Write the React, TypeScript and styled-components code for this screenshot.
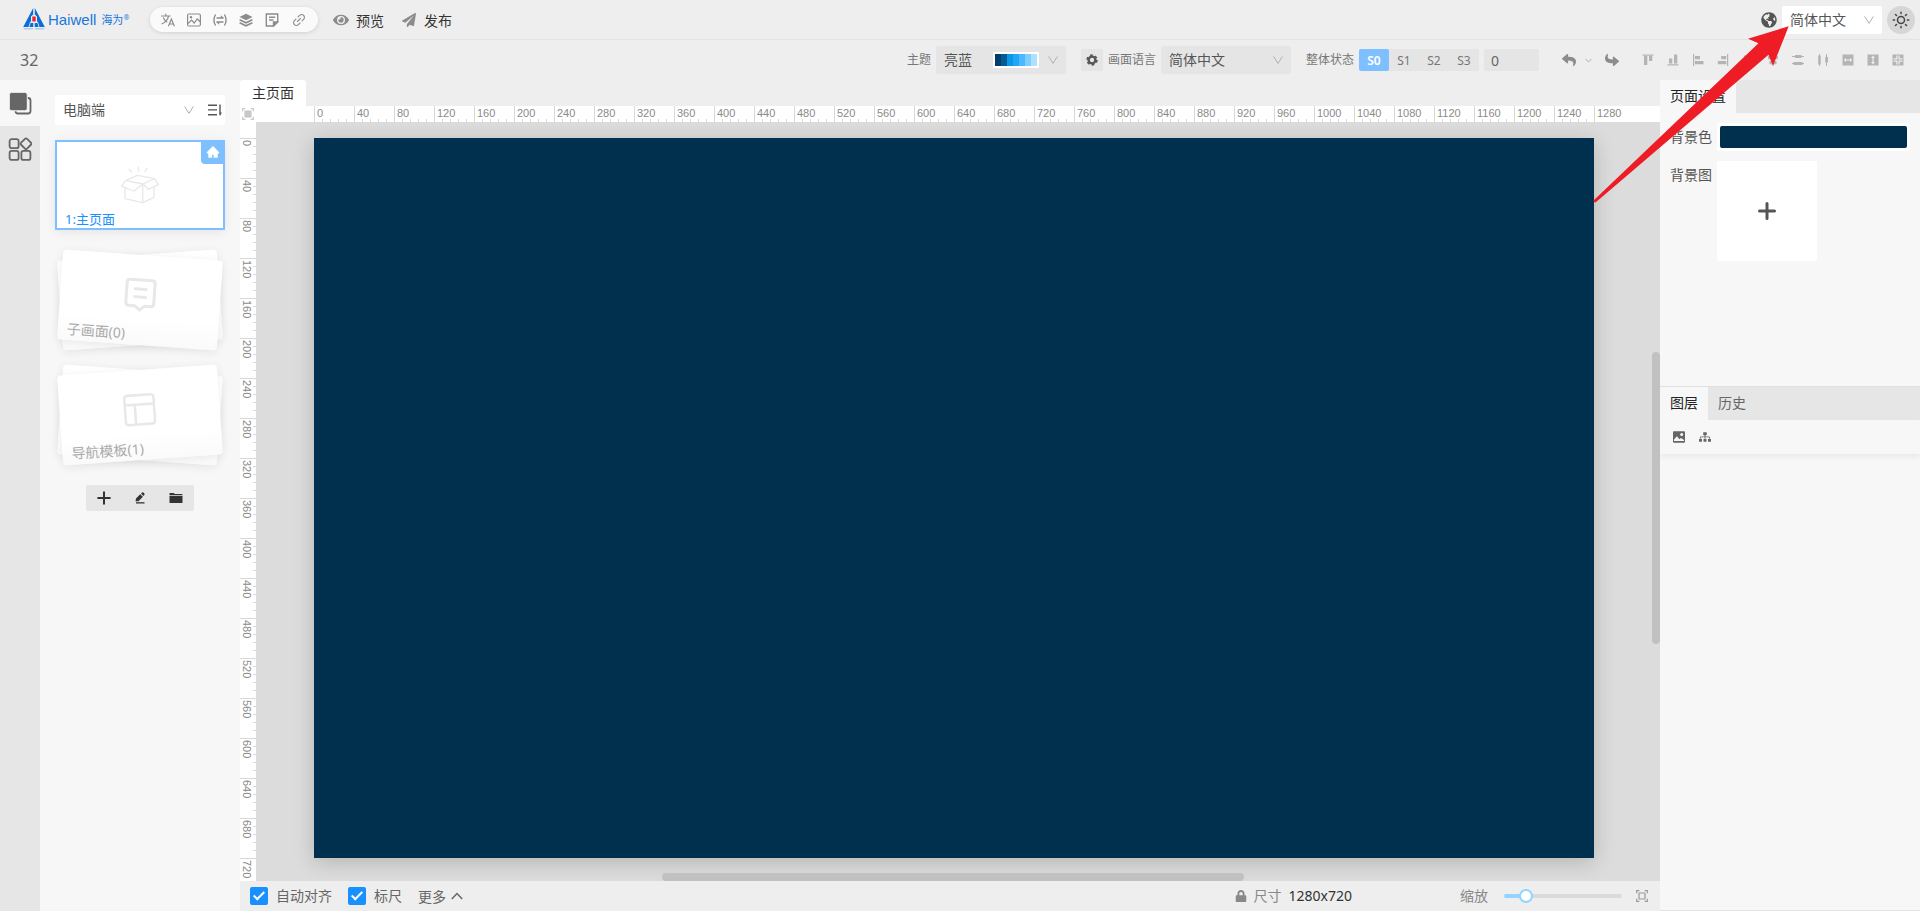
import React from 'react';
import styled, { createGlobalStyle, css } from 'styled-components';
import { FaEye, FaPaperPlane, FaReply, FaSitemap, FaLock, FaGlobeAmericas } from 'react-icons/fa';
import { AiOutlineLink, AiFillHome } from 'react-icons/ai';

const LATIN_CJK = '"Noto Sans", "Open Sans", "Noto Sans CJK SC", sans-serif';

const GlobalStyle = createGlobalStyle`
  *, *::before, *::after { box-sizing: border-box; }
  body { margin: 0; }
  body, button, input, select {
    font-family: ${LATIN_CJK};
    font-size: 14px;
    color: #555;
  }
  button, select, input { border: 0; padding: 0; background: none; border-radius: 0; outline: none; margin: 0; }
  button { cursor: pointer; }
  svg { display: block; flex: none; }
`;

const Shell = styled.div`
  position: relative;
  display: flex;
  flex-direction: column;
  height: 100vh;
  overflow: hidden;
  background: #eee;
  line-height: 20px;
`;

/* ---------- header ---------- */
const Header = styled.header`
  display: flex;
  align-items: center;
  justify-content: space-between;
  height: 40px;
  padding: 0 5px 0 22px;
  border-bottom: 1px solid #e3e3e3;
`;

const Cluster = styled.div<{ $gap: number }>`
  display: flex;
  align-items: center;
  gap: ${(p) => p.$gap}px;
`;

const Logo = styled.a`
  display: flex;
  align-items: center;
  gap: 2px;
  width: 128px;
  color: #1877db;
  text-decoration: none;
  white-space: nowrap;
`;

const LogoName = styled.span`
  font: 15px/20px "Liberation Sans", sans-serif;
`;

/* The dot of the "i" is red, its stem stays blue. */
const LogoDot = styled.span`
  background: linear-gradient(#ee2233 6px, #1877db 6px);
  background-clip: text;
  color: transparent;
`;

const LogoLocal = styled.span`
  margin-left: 3px;
  font-size: 11px;
  line-height: 20px;
  sup { font-size: 7px; line-height: 8px; vertical-align: 4px; }
`;

const Pill = styled.nav`
  display: flex;
  align-items: center;
  gap: 12px;
  height: 25px;
  padding: 0 11px;
  border-radius: 13px;
  background: #fafafa;
  box-shadow: 0 1px 4px rgba(0, 0, 0, 0.12);
`;

const IconButton = styled.button<{ $color?: string }>`
  display: grid;
  place-items: center;
  color: ${(p) => p.$color ?? '#8c8c8c'};
`;

const TextButton = styled.button<{ $gap: number; $color: string }>`
  display: flex;
  align-items: center;
  gap: ${(p) => p.$gap}px;
  color: ${(p) => p.$color};
  svg { color: #8c8c8c; }
`;

const ThemeToggle = styled(IconButton)`
  width: 28px;
  height: 28px;
  border-radius: 50%;
  background: #d6d6d6;
`;

/* ---------- drop-down ---------- */
const SelectBox = styled.div<{ $width?: number; $fill: string; $height: number }>`
  display: grid;
  align-items: center;
  width: ${(p) => (p.$width ? p.$width + 'px' : 'auto')};
  height: ${(p) => p.$height}px;
  border-radius: 2px;
  background: ${(p) => p.$fill};
  > * { grid-area: 1 / 1; }
  > svg { justify-self: end; margin-right: 8px; color: #b0b0b0; pointer-events: none; }
  select {
    width: 100%;
    height: 100%;
    padding: 0 8px 1px;
    appearance: none;
    color: #555;
  }
`;

const Swatches = styled.span`
  display: flex;
  justify-self: end;
  margin-right: 27px;
  border: 2px solid #fff;
  pointer-events: none;
`;

const Swatch = styled.i<{ $color: string }>`
  width: 6px;
  height: 12px;
  background: ${(p) => p.$color};
`;

/* ---------- toolbar ---------- */
const Toolbar = styled.div`
  display: flex;
  align-items: center;
  justify-content: space-between;
  height: 40px;
  padding: 0 16px 0 20px;
`;

const ProjectName = styled.h1`
  margin: 0;
  font-size: 16px;
  font-weight: 400;
  color: #666;
`;

const SmallLabel = styled.label`
  font-size: 12px;
  color: #777;
  white-space: nowrap;
`;

const SettingsButton = styled(IconButton)`
  width: 22px;
  height: 22px;
  border-radius: 2px;
  background: #e5e5e5;
`;

const StateGroup = styled.div`
  display: flex;
  height: 22px;
  border-radius: 2px;
  background: #e5e5e5;
`;

const StateButton = styled.button<{ $active?: boolean }>`
  width: 30px;
  font-size: 12px;
  color: #777;
  ${(p) => p.$active && css`
    color: #fff;
    background: #7ebfff;
    border-radius: 2px;
    font-weight: 600;
  `}
`;

const StateInput = styled.input`
  width: 55px;
  height: 22px;
  padding: 0 7px;
  border-radius: 2px;
  background: #e5e5e5;
  color: #666;
`;

/* ---------- workspace ---------- */
const Workspace = styled.main`
  display: flex;
  flex: 1;
  min-height: 0;
`;

const Rail = styled.nav`
  display: flex;
  flex-direction: column;
  flex: none;
  width: 40px;
  background: #e6e6e6;
`;

const RailButton = styled(IconButton)<{ $active?: boolean }>`
  height: 46px;
  background: ${(p) => (p.$active ? '#f7f7f7' : 'transparent')};
`;

const Sidebar = styled.aside`
  display: flex;
  flex-direction: column;
  align-items: center;
  flex: none;
  gap: 25px;
  width: 200px;
  padding: 15px;
  background: #f7f7f7;
`;

const PageGroup = styled.section`
  display: flex;
  flex-direction: column;
  gap: 15px;
  width: 100%;
`;

const DeviceRow = styled.div`
  display: flex;
  align-items: center;
  gap: 6px;
  padding-right: 3px;
  border-radius: 2px;
  background: #fff;
  ${SelectBox} { flex: 1; }
`;

const PageCard = styled.button`
  position: relative;
  display: grid;
  place-items: center;
  height: 90px;
  border: 2px solid #7ebfff;
  background: #fff;
  box-shadow: 0 2px 10px rgba(0, 0, 0, 0.08);
`;

const HomeBadge = styled.span`
  position: absolute;
  top: -2px;
  right: -2px;
  display: grid;
  place-items: center;
  width: 24px;
  height: 24px;
  border-bottom-left-radius: 4px;
  background: #7ebfff;
  color: #fff;
`;

const CardCaption = styled.span`
  position: absolute;
  left: 8px;
  bottom: 0;
  font-size: 13px;
  color: #1890ff;
`;

const Stack = styled.button<{ $angle: number }>`
  display: grid;
  width: 160px;
  height: 90px;
  > * { grid-area: 1 / 1; }
  > :first-child { transform: rotate(${(p) => -p.$angle}deg); }
  > :last-child { transform: rotate(${(p) => p.$angle}deg); }
`;

const StackSheet = styled.span`
  position: relative;
  display: grid;
  justify-items: center;
  padding-top: 23px;
  border-radius: 4px;
  background: linear-gradient(#fff 70%, #fafafa);
  box-shadow: 0 2px 10px rgba(0, 0, 0, 0.08);
`;

const StackCaption = styled.span`
  position: absolute;
  left: 9px;
  bottom: 2px;
  color: #aaa;
`;

const PageActions = styled.div`
  display: flex;
  height: 26px;
  border-radius: 2px;
  background: #e6e6e6;
  button { width: 36px; }
`;

/* ---------- editor ---------- */
const Editor = styled.section`
  display: flex;
  flex-direction: column;
  flex: 1;
  min-width: 0;
`;

const PageTab = styled.button`
  align-self: flex-start;
  height: 26px;
  padding: 0 12px 2px;
  border-radius: 3px 3px 0 0;
  background: #fff;
  color: #333;
`;

const Stage = styled.div`
  display: grid;
  grid-template: 16px minmax(0, 1fr) / 16px minmax(0, 1fr);
  flex: 1;
  min-height: 0;
  background: #fff;
`;

const TopRuler = styled.div`
  display: flex;
  padding-left: 58px;
  overflow: hidden;
`;

const SideRuler = styled.div`
  display: flex;
  flex-direction: column;
  padding-top: 16px;
  overflow: hidden;
`;

const markText = css`
  flex: none;
  font: 11px/14px "Liberation Sans", sans-serif;
  color: #8a8a8a;
`;

const TopMark = styled.span<{ $last: boolean }>`
  ${markText}
  width: 40px;
  padding-left: 2px;
  border-left: 1px solid #d8d8d8;
  background: ${(p) => (p.$last ? 'none' : 'repeating-linear-gradient(90deg, transparent 0 7px, #d8d8d8 7px 8px) left bottom / 100% 3px no-repeat')};
`;

const SideMark = styled.span<{ $last: boolean }>`
  ${markText}
  height: 40px;
  padding-top: 1px;
  padding-right: 2px;
  writing-mode: vertical-rl;
  border-top: 1px solid #d8d8d8;
  background: ${(p) => (p.$last ? 'none' : 'repeating-linear-gradient(180deg, transparent 0 7px, #d8d8d8 7px 8px) right top / 3px 100% no-repeat')};
`;

const Viewport = styled.div`
  position: relative;
  padding: 16px 58px;
  overflow: hidden;
  background: #dcdcdc;
`;

const Artboard = styled.div`
  width: 1280px;
  height: 720px;
  background: #00304e;
  box-shadow: 0 4px 20px rgba(0, 0, 0, 0.18);
`;

const ScrollThumb = styled.div<{ $axis: 'x' | 'y' }>`
  position: absolute;
  border-radius: 4px;
  background: #c1c1c1;
  ${(p) => p.$axis === 'x'
    ? css`left: 28.9%; bottom: 0; width: 41.5%; height: 8px;`
    : css`right: 0; top: 30.3%; width: 8px; height: 38.5%;`}
`;

const StatusBar = styled.footer`
  display: flex;
  align-items: center;
  justify-content: space-between;
  height: 30px;
  padding: 0 12px 0 10px;
`;

const Check = styled.label`
  display: flex;
  align-items: center;
  gap: 8px;
  color: #666;
  input {
    display: grid;
    place-items: center;
    width: 18px;
    height: 18px;
    appearance: none;
    border-radius: 2px;
    background: #1890ff;
  }
  input::after {
    content: '';
    width: 6px;
    height: 11px;
    margin-bottom: 3px;
    border: solid #fff;
    border-width: 0 2px 2px 0;
    transform: rotate(45deg);
  }
`;

const SizeInfo = styled.div`
  display: flex;
  align-items: center;
  gap: 7px;
  color: #888;
  strong { font-weight: 400; color: #333; }
`;

const Zoom = styled.label`
  display: flex;
  align-items: center;
  gap: 16px;
  color: #888;
  input {
    width: 118px;
    height: 4px;
    appearance: none;
    border-radius: 2px;
    background: linear-gradient(90deg, #91d5ff 19%, #dadada 19%);
  }
  input::-webkit-slider-thumb {
    width: 14px;
    height: 14px;
    appearance: none;
    border: 2px solid #91d5ff;
    border-radius: 50%;
    background: #fff;
  }
`;

/* ---------- inspector ---------- */
const Inspector = styled.aside`
  display: flex;
  flex-direction: column;
  flex: none;
  width: 260px;
  background: #f7f7f7;
  border-bottom: 1px solid #e3e3e3;
`;

const Tabs = styled.div`
  display: flex;
  height: 33px;
  background: #e6e6e6;
`;

const Tab = styled.button<{ $active?: boolean }>`
  padding: 0 10px 3px;
  color: ${(p) => (p.$active ? '#222' : '#666')};
  background: ${(p) => (p.$active ? '#f7f7f7' : 'transparent')};
`;

const Fields = styled.div`
  display: flex;
  flex-direction: column;
  gap: 10px;
  height: 273px;
  padding: 10px;
`;

const Field = styled.div`
  display: flex;
  gap: 5px;
  label { line-height: 28px; color: #555; }
`;

const ColorInput = styled.input`
  flex: 1;
  height: 28px;
  padding: 3px;
  border-radius: 2px;
  background: #fff;
  appearance: none;
  &::-webkit-color-swatch-wrapper { padding: 0; }
  &::-webkit-color-swatch { border: 0; border-radius: 2px; }
`;

const ImagePicker = styled(IconButton)`
  width: 100px;
  height: 100px;
  border-radius: 2px;
  background: #fff;
`;

const Layers = styled.section`
  border-top: 1px solid #e0e0e0;
`;

const LayerTools = styled.div`
  display: flex;
  align-items: center;
  gap: 14px;
  height: 34px;
  padding: 0 13px;
  box-shadow: 0 3px 6px rgba(0, 0, 0, 0.06);
`;

/* Annotation arrow that points at the language menu. */
const Pointer = styled.svg`
  position: absolute;
  top: 26px;
  right: 131px;
  pointer-events: none;
`;

/* ---------- icons ---------- */
const Chevron = ({ size = 10 }: { size?: number }) => (
  <svg width={size} height={size} viewBox="0 0 10 10" fill="none" stroke="currentColor" strokeWidth="1">
    <path d="M.6 1.4 5 8.4 9.4 1.4" />
  </svg>
);

const LogoMark = () => (
  <svg width="24" height="26" viewBox="0 0 24 26">
    <defs>
      <linearGradient id="mirror" x1="0" x2="0" y1="0" y2="1">
        <stop offset="0" stopColor="#1373d6" stopOpacity=".35" />
        <stop offset="1" stopColor="#1373d6" stopOpacity="0" />
      </linearGradient>
    </defs>
    <path d="M11.200 1v6.500L9 9.500V16h2.300v4H1.200z" fill="#0a6cd6" />
    <path d="M12.800 1v6.500L15 9.500V16h-2.300v4h10.100z" fill="#0a6cd6" />
    <path d="M8.600 14.500 7 20M15.400 14.500 17 20" stroke="#dfe9f5" strokeWidth=".9" />
    <rect x="10.300" y="9.500" width="3.400" height="5" fill="#ee2233" />
    <path d="M1.200 21h9.800v2.500H2.500z M13 21h9.800l-1.300 2.500H13z" fill="url(#mirror)" />
  </svg>
);

const TranslateIcon = () => (
  <svg width="14" height="14" viewBox="0 0 14 14" fill="none" stroke="currentColor" strokeWidth="1.200">
    <path d="M0 3h9.600M4.800.800v2.200M7.600 3Q6.500 8.500.6 11M2.200 4.500Q3.500 7.500 6.200 9.300" />
    <path d="M7.400 13.300 10.400 6l3 7.300M8.400 11h4" />
  </svg>
);

const LayersIcon = () => (
  <svg width="14" height="14" viewBox="0 0 14 14" fill="none" stroke="currentColor" strokeWidth="1.500">
    <path d="M7 .8 13.500 4 7 7.200.5 4z" fill="currentColor" stroke="none" />
    <path d="M.6 6.800 7 9.800l6.400-3M.6 9.800 7 12.800l6.400-3" />
  </svg>
);

const PictureIcon = () => (
  <svg width="14" height="14" viewBox="0 0 14 14" fill="none" stroke="currentColor" strokeWidth="1.200">
    <rect x=".6" y="1" width="12.800" height="12" rx="1.500" />
    <path d="M1 10.500 4.600 7l2.600 3 3-4L13.500 9" />
    <circle cx="4" cy="4.200" r=".7" />
  </svg>
);

const VariableIcon = () => (
  <svg width="14" height="14" viewBox="0 0 14 14" fill="none" stroke="currentColor" strokeWidth="1.400">
    <path d="M2.600 1.500Q-.8 7 2.600 12.500M11.400 1.500q3.400 5.500 0 11" />
    <path d="M3.500 5h7M3.500 9h7" />
    <path d="M7.800 2.300 10.800 5H7.800zM6.200 11.700 3.200 9h3z" fill="currentColor" stroke="none" />
  </svg>
);

const NoteIcon = () => (
  <svg width="14" height="14" viewBox="0 0 14 14" fill="none" stroke="currentColor" strokeWidth="1.400">
    <path d="M8.500 13H1.300V1h11.400v8z" />
    <path d="M4 4.200h6.200M4 7h4.500" />
    <path d="M8.500 13V9h4z" fill="currentColor" />
  </svg>
);

const SunIcon = () => (
  <svg width="18" height="18" viewBox="0 0 18 18" fill="none" stroke="#444" strokeWidth="1.500" strokeLinecap="round">
    <circle cx="9" cy="9" r="3.500" />
    <path d="M9 1.200v1.400M9 15.400v1.400M1.200 9h1.400M15.400 9h1.400M3.500 3.500l1 1M13.500 13.500l1 1M3.500 14.500l1-1M13.500 4.500l1-1" />
  </svg>
);

const NutIcon = () => (
  <svg width="12" height="12" viewBox="0 0 12 12" fill="none" stroke="#555">
    <circle cx="6" cy="6" r="3.400" strokeWidth="2.400" />
    <circle cx="6" cy="6" r="4.900" strokeWidth="1.600" strokeDasharray="2.600 2.530" />
  </svg>
);

const SheetsIcon = () => (
  <svg width="24" height="24" viewBox="0 0 24 24">
    <rect x="7.500" y="7" width="15" height="15.500" rx="2.500" fill="none" stroke="#666" strokeWidth="1.800" />
    <rect x="1.300" y="1.300" width="18" height="18.500" rx="2.500" fill="#666" stroke="#f7f7f7" />
  </svg>
);

const WidgetsIcon = () => (
  <svg width="24" height="24" viewBox="0 0 24 24" fill="none" stroke="#666" strokeWidth="1.800">
    <rect x="1.600" y="2.200" width="9" height="9" rx="2" />
    <rect x="1.600" y="13.900" width="9" height="9" rx="2" />
    <rect x="13.400" y="13.900" width="9" height="9" rx="2" />
    <rect x="13.800" y="2.500" width="8.400" height="8.400" rx="1.500" transform="rotate(45 18 6.700)" />
  </svg>
);

const SortIcon = () => (
  <svg width="14" height="12" viewBox="0 0 14 12" fill="none" stroke="#555" strokeWidth="1.400">
    <path d="M0 1.200h9M0 5.900h9M0 10.700h9M12 .5v10.700" />
    <path d="M12 8.500v3l2-3z" fill="#555" stroke="none" />
  </svg>
);

const OpenBoxIcon = () => (
  <svg width="38" height="38" viewBox="0 0 114 114" fill="none" stroke="#e8e8e8" strokeWidth="4" strokeLinejoin="round">
    <path d="M24 9l9 11M52 2l1 15M79 5l-8 13" />
    <path d="M14 44 49 28l52 10M14 44l52 10 35-16M14 44 2 61l37 14 27-21 16 16 30-14-11-18" />
    <path d="M12 66v32l53 12 34-16V64M65 54v56" />
  </svg>
);

const BubbleIcon = () => (
  <svg width="32" height="34" viewBox="0 0 32 34" fill="none" stroke="#e8e8e8" strokeWidth="3" strokeLinejoin="round" strokeLinecap="round">
    <path d="M5 2h22q3 0 3 3v20q0 3-3 3h-6l-5 4-5-4H5q-3 0-3-3V5q0-3 3-3z" />
    <path d="M10.500 11h11M10.500 19h11" />
  </svg>
);

const LayoutIcon = () => (
  <svg width="32" height="34" viewBox="0 0 32 34" fill="none" stroke="#e8e8e8" strokeWidth="2.600">
    <rect x="1.300" y="2" width="29.400" height="29.400" rx="3" />
    <path d="M1 11.500h30M11.500 11.500V31" />
  </svg>
);

const PlusIcon = ({ size, weight }: { size: number; weight: number }) => (
  <svg width={size} height={size} viewBox="0 0 18 18" stroke="currentColor" strokeWidth={weight} strokeLinecap="round">
    <path d="M9 1.500v15M1.500 9h15" />
  </svg>
);

const PencilIcon = () => (
  <svg width="12" height="12" viewBox="0 0 12 12" fill="#333">
    <path d="M1.500 9.300 2 6.500 6.200 2.200 8.900 4.700 4.500 9.300z M7 1.500 8.200.4q.6-.5 1.200 0l1.100 1.300q.4.600-.1 1.100L9.500 3.900z" />
    <path d="M2 10.200h8.500v1.300H2z" />
  </svg>
);

const FolderIcon = () => (
  <svg width="14" height="12" viewBox="0 0 14 12" fill="#333">
    <path d="M.5 1.500Q.5 1 1 1h3.500L6 2h7q.5 0 .5.500v.700H.5zM.5 4h13v6.500q0 .5-.5.500H1q-.5 0-.5-.5z" />
  </svg>
);

const FrameIcon = ({ filled }: { filled?: boolean }) => (
  <svg width="12" height="12" viewBox="0 0 12 12" fill="none" stroke={filled ? '#c8c8c8' : '#999'} strokeWidth="1.200">
    <path d="M.7 3.300V.7h2.600M8.700.7h2.600v2.600M11.300 8.700v2.600H8.700M3.300 11.300H.7V8.700" />
    <rect x="3" y="3" width="6" height="6" rx=".6" fill={filled ? '#c8c8c8' : 'none'} />
  </svg>
);

const LandscapeIcon = () => (
  <svg width="12" height="12" viewBox="0 0 12 12">
    <rect y=".3" width="12" height="11.400" rx="1" fill="#666" />
    <circle cx="8.700" cy="3.600" r="1.500" fill="#f7f7f7" />
    <path d="M1 10V8.500l3-3.200 2.300 2.900L8 6.900 11 9v1z" fill="#f7f7f7" />
  </svg>
);

const CaretUp = () => (
  <svg width="12" height="8" viewBox="0 0 12 8" fill="none" stroke="#666" strokeWidth="1.500">
    <path d="M.8 7 6 1.500 11.200 7" />
  </svg>
);

const alignShapes: [string, string][] = [
  ['顶对齐', 'M.5 0.500h11v1.200H.5zM2 2h3.300v9H2zM7 2h3.300v5H7z'],
  ['底对齐', 'M.5 10.300h11v1.200H.5zM2 4.500h3.300v5H2zM7 .5h3.300v9H7z'],
  ['左对齐', 'M1 0h1.200v12H1zM3 2h5v3.300H3zM3 7h8.500v3.300H3z'],
  ['右对齐', 'M10 0h1.200v12H10zM4.200 2h5v3.300h-5zM.8 7h8.500v3.300H.8z'],
  ['垂直居中', 'M0 5.500h12v1H0zM2 1.500h3v9H2zM7 3h3v6H7z'],
  ['水平居中', 'M5.500 0h1v12h-1zM1 2h10v3.300H1zM2.500 7h7v3.300h-7z'],
  ['垂直等距', 'M0 2h12v1H0zM3 1h6.500v3H3zM0 9h12v1H0zM1.500 8h9v3h-9z'],
  ['水平等距', 'M2 0h1v12H2zM1.200 1.500h2.600v9H1.200zM9 0h1v12H9zM8.200 3h2.800v5.500H8.200z'],
  ['等宽', 'M.5 .5h11v11H.5zM1.700 6l2.300 2V6.600h4V8L10.300 6 8 4v1.400H4V4z'],
  ['等高', 'M.5 .5h11v11H.5zM6 1.500 4 4h1.400v4H4l2 2.500L8 8H6.600V4H8z'],
  ['等尺寸', 'M.5 .5h11v11H.5zM5.500 1.500h-1.200v2.800H1.500v1.200h4zM6.500 1.500v4h4V4.300H7.700V1.500zM1.500 6.500v1.200h2.800v2.800h1.200v-4zM6.500 6.500v4h1.200V7.700h2.800V6.500z'],
];

const swatchColors = ['#003e6b', '#005c94', '#0c96e6', '#22a7f7', '#4db8ff', '#80ceff', '#aee1ff'];
const range = (end: number) => Array.from({ length: end / 40 + 1 }, (_, i) => i * 40);

type RulerProps = { end: number };
const HorizontalRuler = ({ end }: RulerProps) => (
  <TopRuler>{range(end).map((n) => <TopMark key={n} $last={n === end}>{n}</TopMark>)}</TopRuler>
);
const VerticalRuler = ({ end }: RulerProps) => (
  <SideRuler>{range(end).map((n) => <SideMark key={n} $last={n === end}>{n}</SideMark>)}</SideRuler>
);

export default function App() {
  return (
    <Shell>
      <GlobalStyle />
      <Header>
        <Cluster $gap={0}>
          <Logo href="#">
            <LogoMark />
            <LogoName>Ha<LogoDot>i</LogoDot>well</LogoName>
            <LogoLocal>海为<sup>®</sup></LogoLocal>
          </Logo>
          <Cluster $gap={15}>
            <Pill>
              <IconButton aria-label="翻译"><TranslateIcon /></IconButton>
              <IconButton aria-label="图库"><PictureIcon /></IconButton>
              <IconButton aria-label="变量"><VariableIcon /></IconButton>
              <IconButton aria-label="图层"><LayersIcon /></IconButton>
              <IconButton aria-label="备注"><NoteIcon /></IconButton>
              <IconButton aria-label="链接"><AiOutlineLink size={16} /></IconButton>
            </Pill>
            <Cluster $gap={18}>
              <TextButton $gap={7} $color="#333"><FaEye size={16} />预览</TextButton>
              <TextButton $gap={8} $color="#333"><FaPaperPlane size={14} />发布</TextButton>
            </Cluster>
          </Cluster>
        </Cluster>
        <Cluster $gap={5}>
          <FaGlobeAmericas size={16} color="#555" />
          <SelectBox $width={100} $height={28} $fill="#fff">
            <select aria-label="语言"><option>简体中文</option></select>
            <Chevron />
          </SelectBox>
          <ThemeToggle aria-label="亮色模式"><SunIcon /></ThemeToggle>
        </Cluster>
      </Header>

      <Toolbar>
        <ProjectName>32</ProjectName>
        <Cluster $gap={23}>
          <Cluster $gap={15}>
            <Cluster $gap={5}>
              <SmallLabel htmlFor="theme">主题</SmallLabel>
              <SelectBox $width={130} $height={28} $fill="#e5e5e5">
                <select id="theme"><option>亮蓝</option></select>
                <Swatches>{swatchColors.map((c) => <Swatch key={c} $color={c} />)}</Swatches>
                <Chevron />
              </SelectBox>
            </Cluster>
            <Cluster $gap={5}>
              <SettingsButton aria-label="语言设置"><NutIcon /></SettingsButton>
              <SmallLabel htmlFor="page-lang">画面语言</SmallLabel>
              <SelectBox $width={130} $height={28} $fill="#e5e5e5">
                <select id="page-lang"><option>简体中文</option></select>
                <Chevron />
              </SelectBox>
            </Cluster>
            <Cluster $gap={5}>
              <SmallLabel htmlFor="state">整体状态</SmallLabel>
              <StateGroup>
                {['S0', 'S1', 'S2', 'S3'].map((s) => <StateButton key={s} $active={s === 'S0'}>{s}</StateButton>)}
              </StateGroup>
              <StateInput id="state" defaultValue="0" />
            </Cluster>
          </Cluster>
          <Cluster $gap={13}>
            <Cluster $gap={9}>
              <IconButton aria-label="撤销"><FaReply size={14} /></IconButton>
              <IconButton aria-label="撤销列表" $color="#b0b0b0">
                <svg width="7" height="5" viewBox="0 0 7 5" fill="none" stroke="currentColor"><path d="M.5.800 3.500 4 6.500.800" /></svg>
              </IconButton>
            </Cluster>
            <IconButton aria-label="重做"><FaReply size={14} transform="rotate(180)" /></IconButton>
          </Cluster>
          <Cluster $gap={13}>
            {alignShapes.map(([name, d]) => (
              <IconButton key={name} aria-label={name} $color="#b4b4b4">
                <svg width="12" height="12" viewBox="0 0 12 12" fill="currentColor" fillRule={name.startsWith('等') ? 'evenodd' : 'nonzero'}><path d={d} /></svg>
              </IconButton>
            ))}
          </Cluster>
        </Cluster>
      </Toolbar>

      <Workspace>
        <Rail>
          <RailButton $active aria-label="画面"><SheetsIcon /></RailButton>
          <RailButton aria-label="组件"><WidgetsIcon /></RailButton>
        </Rail>

        <Sidebar>
          <PageGroup>
            <DeviceRow>
              <SelectBox $height={30} $fill="#fff">
                <select aria-label="终端"><option>电脑端</option></select>
                <Chevron />
              </SelectBox>
              <IconButton aria-label="排序"><SortIcon /></IconButton>
            </DeviceRow>
            <PageCard>
              <OpenBoxIcon />
              <HomeBadge><AiFillHome size={14} /></HomeBadge>
              <CardCaption>1:主页面</CardCaption>
            </PageCard>
          </PageGroup>
          <Stack $angle={4}>
            <StackSheet />
            <StackSheet><BubbleIcon /><StackCaption>子画面(0)</StackCaption></StackSheet>
          </Stack>
          <Stack $angle={-4}>
            <StackSheet />
            <StackSheet><LayoutIcon /><StackCaption>导航模板(1)</StackCaption></StackSheet>
          </Stack>
          <PageActions>
            <IconButton aria-label="新增" $color="#333"><PlusIcon size={14} weight={2.6} /></IconButton>
            <IconButton aria-label="编辑"><PencilIcon /></IconButton>
            <IconButton aria-label="文件夹"><FolderIcon /></IconButton>
          </PageActions>
        </Sidebar>

        <Editor>
          <PageTab>主页面</PageTab>
          <Stage>
            <IconButton aria-label="定位"><FrameIcon filled /></IconButton>
            <HorizontalRuler end={1280} />
            <VerticalRuler end={720} />
            <Viewport>
              <Artboard />
              <ScrollThumb $axis="x" />
              <ScrollThumb $axis="y" />
            </Viewport>
          </Stage>
          <StatusBar>
            <Cluster $gap={16}>
              <Check><input type="checkbox" defaultChecked />自动对齐</Check>
              <Check><input type="checkbox" defaultChecked />标尺</Check>
              <TextButton $gap={5} $color="#666">更多<CaretUp /></TextButton>
            </Cluster>
            <Cluster $gap={108}>
              <SizeInfo><FaLock size={12} />尺寸<strong>1280x720</strong></SizeInfo>
              <Cluster $gap={14}>
                <Zoom>缩放<input type="range" min="0" max="104" defaultValue="15" /></Zoom>
                <IconButton aria-label="适应画布"><FrameIcon /></IconButton>
              </Cluster>
            </Cluster>
          </StatusBar>
        </Editor>

        <Inspector>
          <Tabs><Tab $active>页面设置</Tab></Tabs>
          <Fields>
            <Field>
              <label htmlFor="bg-color">背景色</label>
              <ColorInput id="bg-color" type="color" defaultValue="#00304e" />
            </Field>
            <Field>
              <label htmlFor="bg-image">背景图</label>
              <ImagePicker id="bg-image" $color="#555" aria-label="选择背景图"><PlusIcon size={18} weight={3} /></ImagePicker>
            </Field>
          </Fields>
          <Layers>
            <Tabs><Tab $active>图层</Tab><Tab>历史</Tab></Tabs>
            <LayerTools>
              <IconButton aria-label="图片"><LandscapeIcon /></IconButton>
              <IconButton aria-label="结构" $color="#666"><FaSitemap size={12} /></IconButton>
            </LayerTools>
          </Layers>
        </Inspector>
      </Workspace>

      <Pointer width="196" height="178" viewBox="0 0 196 178" aria-hidden="true">
        <path fill="#ee1c25" d="M195.700.300 155 12.700l10.500 4.600L.5 174.500q0 2 2 2L175.500 28.700 180 39.700z" />
      </Pointer>
    </Shell>
  );
}
